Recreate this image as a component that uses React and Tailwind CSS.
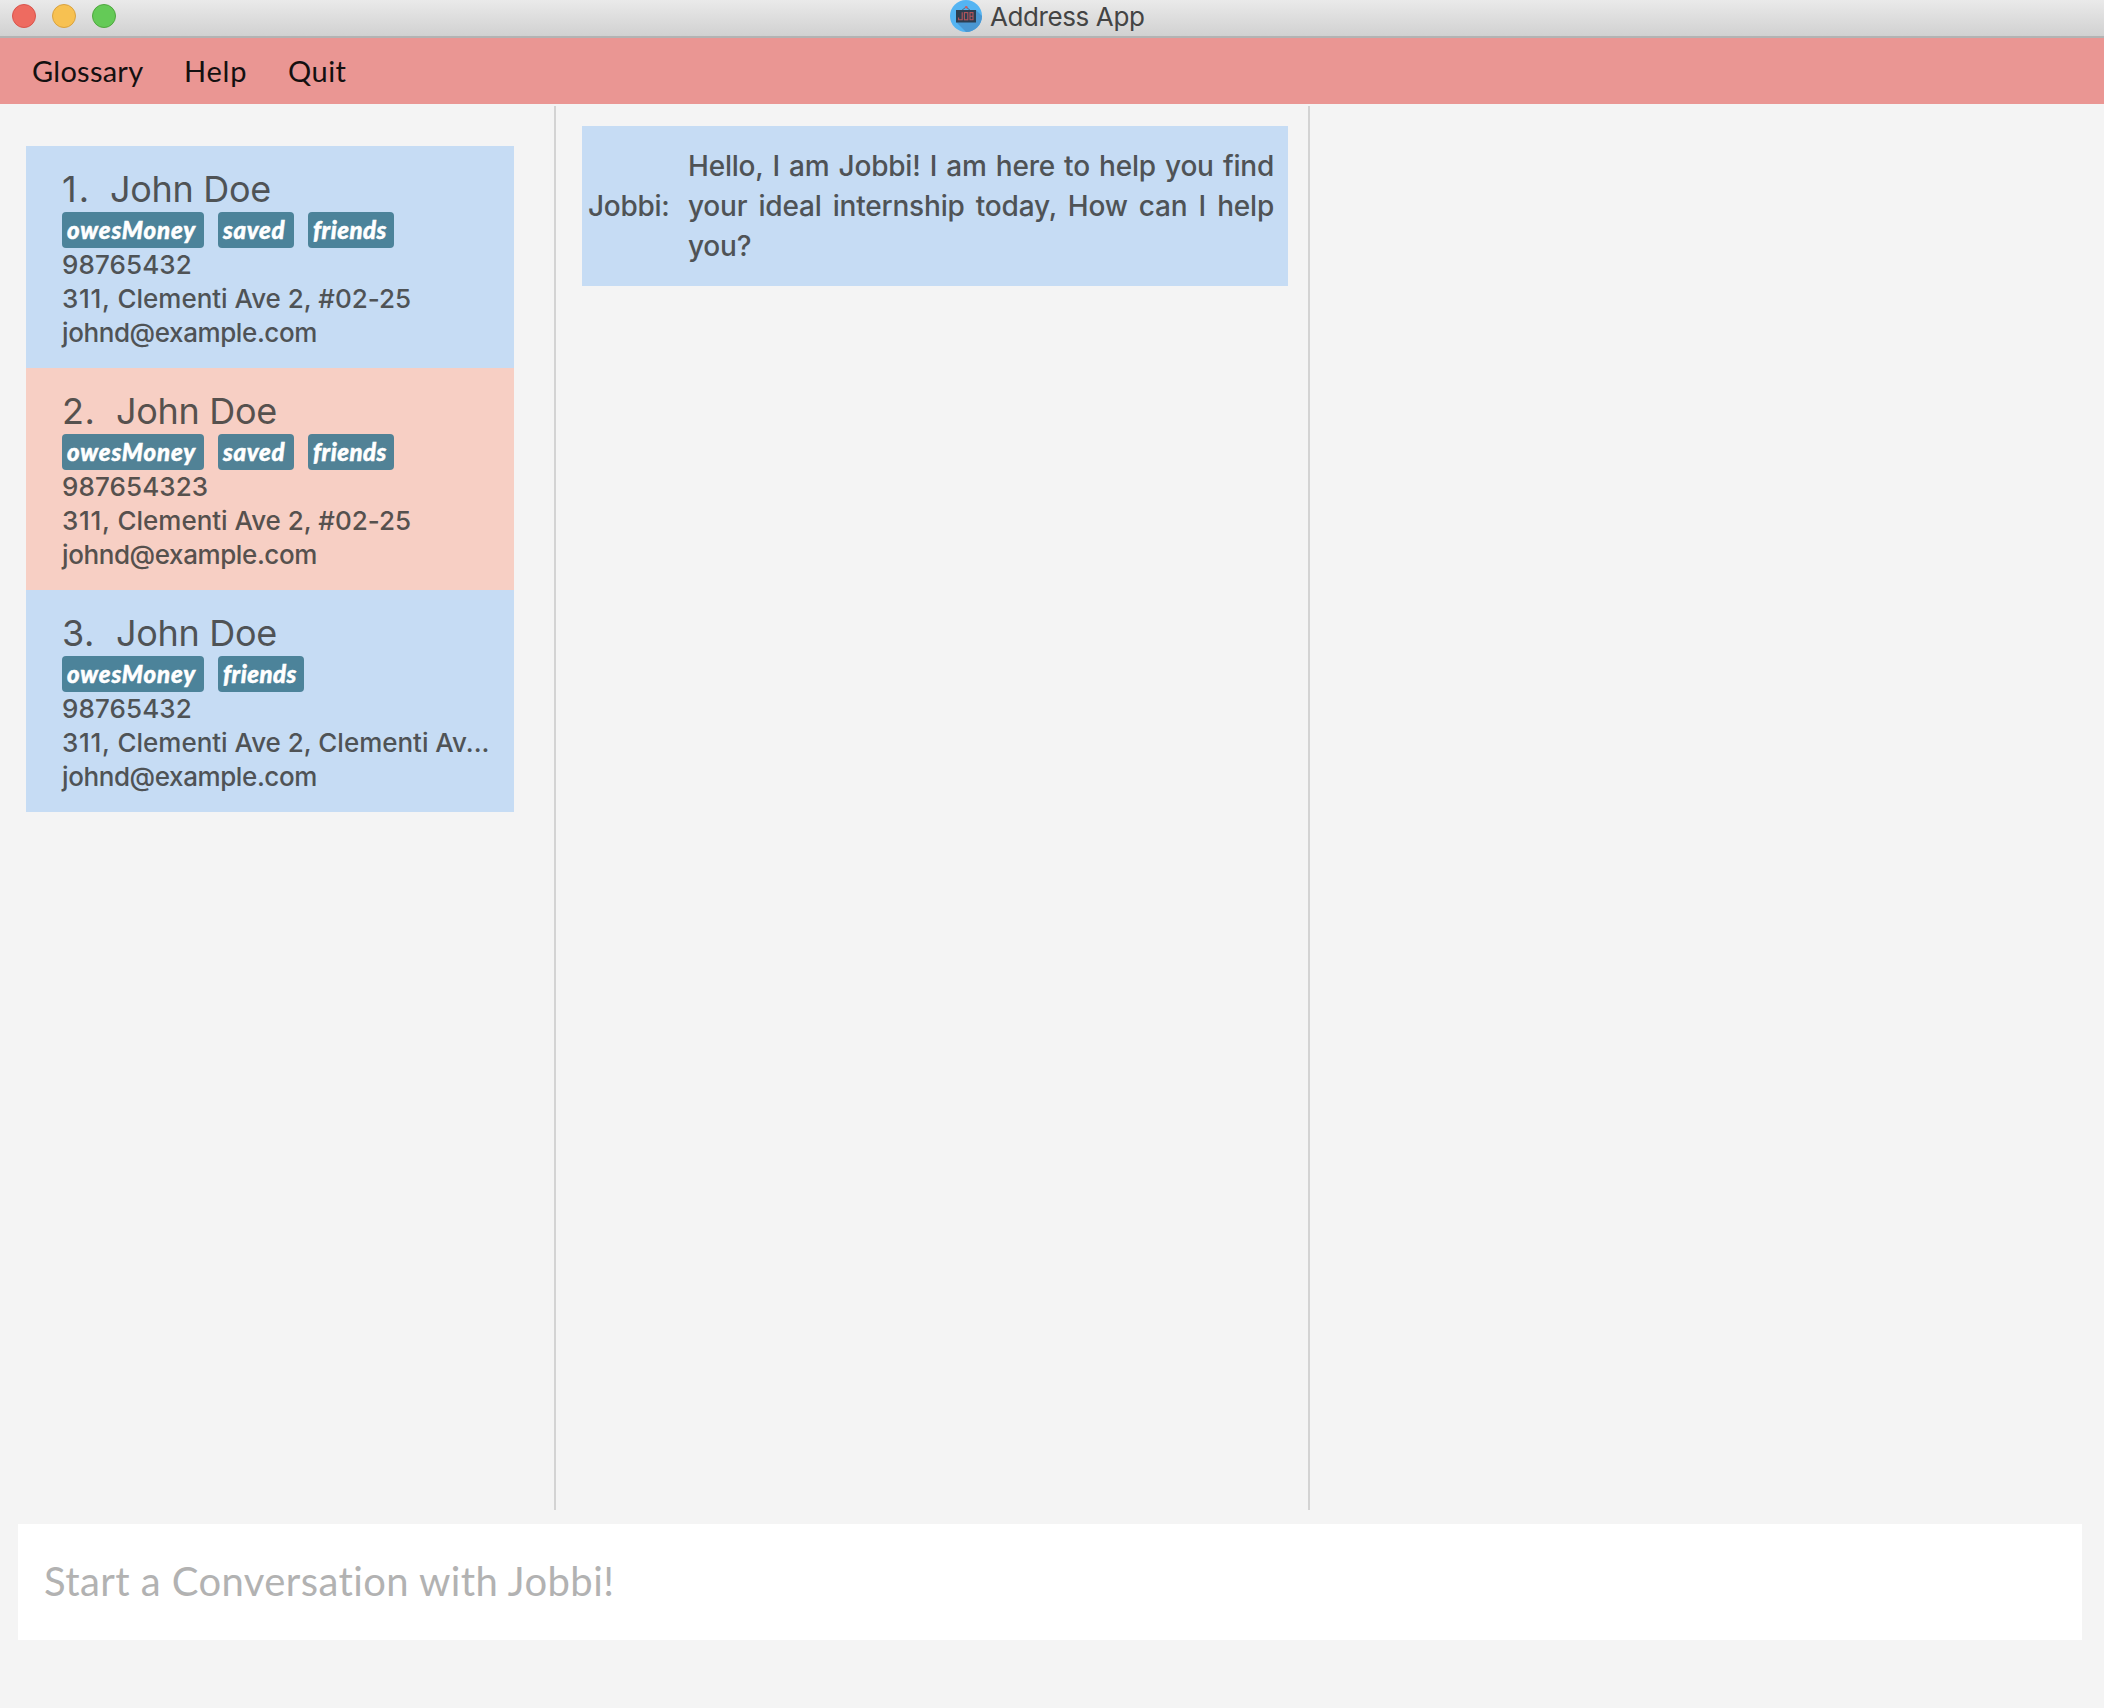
const people = [
  {
    id: '1.',
    idStyle: 'w-[48px] tracking-[2px]',
    bg: 'bg-[#c6dcf4]',
    color: 'text-[#4f5356]',
    tag: 'bg-[#4c839a]',
    tags: ['owesMoney', 'saved', 'friends'],
    phone: '98765432',
    block: '311,',
    street: 'Clementi Ave 2, #02-25',
  },
  {
    id: '2.',
    idStyle: 'w-[54px] tracking-[0.5px]',
    bg: 'bg-[#f7cfc4]',
    color: 'text-[#56514e]',
    tag: 'bg-[#518296]',
    tags: ['owesMoney', 'saved', 'friends'],
    phone: '987654323',
    block: '311,',
    street: 'Clementi Ave 2, #02-25',
  },
  {
    id: '3.',
    idStyle: 'w-[54px] tracking-[0.5px]',
    bg: 'bg-[#c6dcf4]',
    color: 'text-[#4f5356]',
    tag: 'bg-[#4c839a]',
    tags: ['owesMoney', 'friends'],
    phone: '98765432',
    block: '311,',
    street: 'Clementi Ave 2, Clementi Av...',
  },
];

const tagStyles = {
  owesMoney: 'w-[142px] tracking-[0.85px]',
  saved: 'w-[76px] tracking-[0.7px]',
  friends: 'w-[86px] tracking-[0.5px]',
};

function AppIcon() {
  return (
    <svg viewBox="0 0 32 32" className="size-8">
      <circle cx="16" cy="16" r="16" fill="#54b4f2" />
      <path d="M6 22 L26 10 L32 16 A16 16 0 0 1 16 32 Z" fill="#4a97d2" />
      <path d="M11 11 L16 7 L21 11" fill="none" stroke="#4b6a80" strokeWidth="1" />
      <circle cx="16.3" cy="7.3" r="1.3" fill="#cf5a5c" />
      <rect x="6" y="10" width="20" height="12.5" fill="#2c3e50" />
      <g fill="none" stroke="#b5555b" strokeWidth="1.1">
        <path d="M8.6 17.5 V19.8 H12.2 V12.2" />
        <rect x="14.4" y="12.6" width="3.4" height="7.2" />
        <path d="M20 12.6 H23 V19.8 H20 Z M20 16.2 H23.4" />
      </g>
    </svg>
  );
}

function TitleBar() {
  return (
    <header className="flex h-[38px] shrink-0 items-start border-b-2 border-[#b3b3b3] bg-linear-to-b from-[#eaeaea] to-[#d1d1d1]">
      <div className="flex w-[950px] gap-4 pt-1 pl-3">
        <span className="size-6 rounded-full border border-[#d9544c] bg-[#ee6b60]" />
        <span className="size-6 rounded-full border border-[#d9a23f] bg-[#f7c151]" />
        <span className="size-6 rounded-full border border-[#4fa73f] bg-[#64ca57]" />
      </div>
      <AppIcon />
      <h1 className="ml-2 text-[26px] leading-[34px] tracking-[-0.4px] text-[#444444]">Address App</h1>
    </header>
  );
}

function MenuBar() {
  return (
    <nav className="flex h-[66px] shrink-0 items-center bg-[#ea9693] pb-px pl-8 font-['Lato',sans-serif] text-[29px] tracking-[0.25px] text-[#141010]">
      <span className="w-[152px]">Glossary</span>
      <span className="w-[104px] tracking-[0.8px]">Help</span>
      <span className="tracking-[0.5px]">Quit</span>
    </nav>
  );
}

function PersonCard({ person }) {
  return (
    <li className={`h-[222px] pt-[22px] pl-9 ${person.bg} ${person.color}`}>
      <div className="flex h-11 text-[36px] leading-[42px] tracking-[-0.3px]">
        <span className={person.idStyle}>{person.id}</span>
        <span>John Doe</span>
      </div>
      <div className="flex h-9 gap-[14px]">
        {person.tags.map((tag) => (
          <span
            key={tag}
            className={`rounded-[4px] pl-[5px] font-['Lato',sans-serif] text-[24px] leading-[35px] font-black whitespace-nowrap text-white italic [-webkit-text-stroke:0.5px_white] ${tagStyles[tag]} ${person.tag}`}
          >
            {tag}
          </span>
        ))}
      </div>
      <div className="text-[26px] leading-[34px] font-[450] whitespace-nowrap">
        <p className="tracking-[0.1px]">{person.phone}</p>
        <p className="tracking-[-0.02px]">
          <span className="tracking-[0.7px]">{person.block}</span> {person.street}
        </p>
        <p className="tracking-[-0.4px]">johnd@example.com</p>
      </div>
    </li>
  );
}

export default function App() {
  return (
    <div className="flex h-[1708px] w-[2104px] flex-col overflow-hidden bg-[#f4f4f4] font-['Inter',sans-serif]">
      <TitleBar />
      <MenuBar />
      <main className="mt-0.5 flex h-[1404px] shrink-0">
        <section className="w-[554px] pt-10 pl-[26px]">
          <ul className="w-[488px]">
            {people.map((person) => (
              <PersonCard key={person.id} person={person} />
            ))}
          </ul>
        </section>
        <section className="w-[756px] border-x-2 border-[#d3d3d3] pt-5 pl-[26px]">
          <div className="flex h-[160px] w-[706px] items-center bg-[#c6dcf4] pl-1.5 text-[28px] leading-10 font-[450] text-[#4f5356]">
            <span className="w-[100px] tracking-[-0.3px]">Jobbi:</span>
            <p className="w-[586px] text-justify tracking-[-0.2px]">
              Hello, I am Jobbi! I am here to help you find your ideal internship today, How can I help you?
            </p>
          </div>
        </section>
        <section className="flex-1" />
      </main>
      <footer className="mt-[14px] mr-[22px] ml-[18px] flex h-[116px] shrink-0 items-center bg-white pb-[3px] pl-[26px]">
        <span className="font-['Lato',sans-serif] text-[40px] tracking-[0.42px] text-[#b2b2b2]">
          Start a Conversation with Jobbi!
        </span>
      </footer>
    </div>
  );
}
